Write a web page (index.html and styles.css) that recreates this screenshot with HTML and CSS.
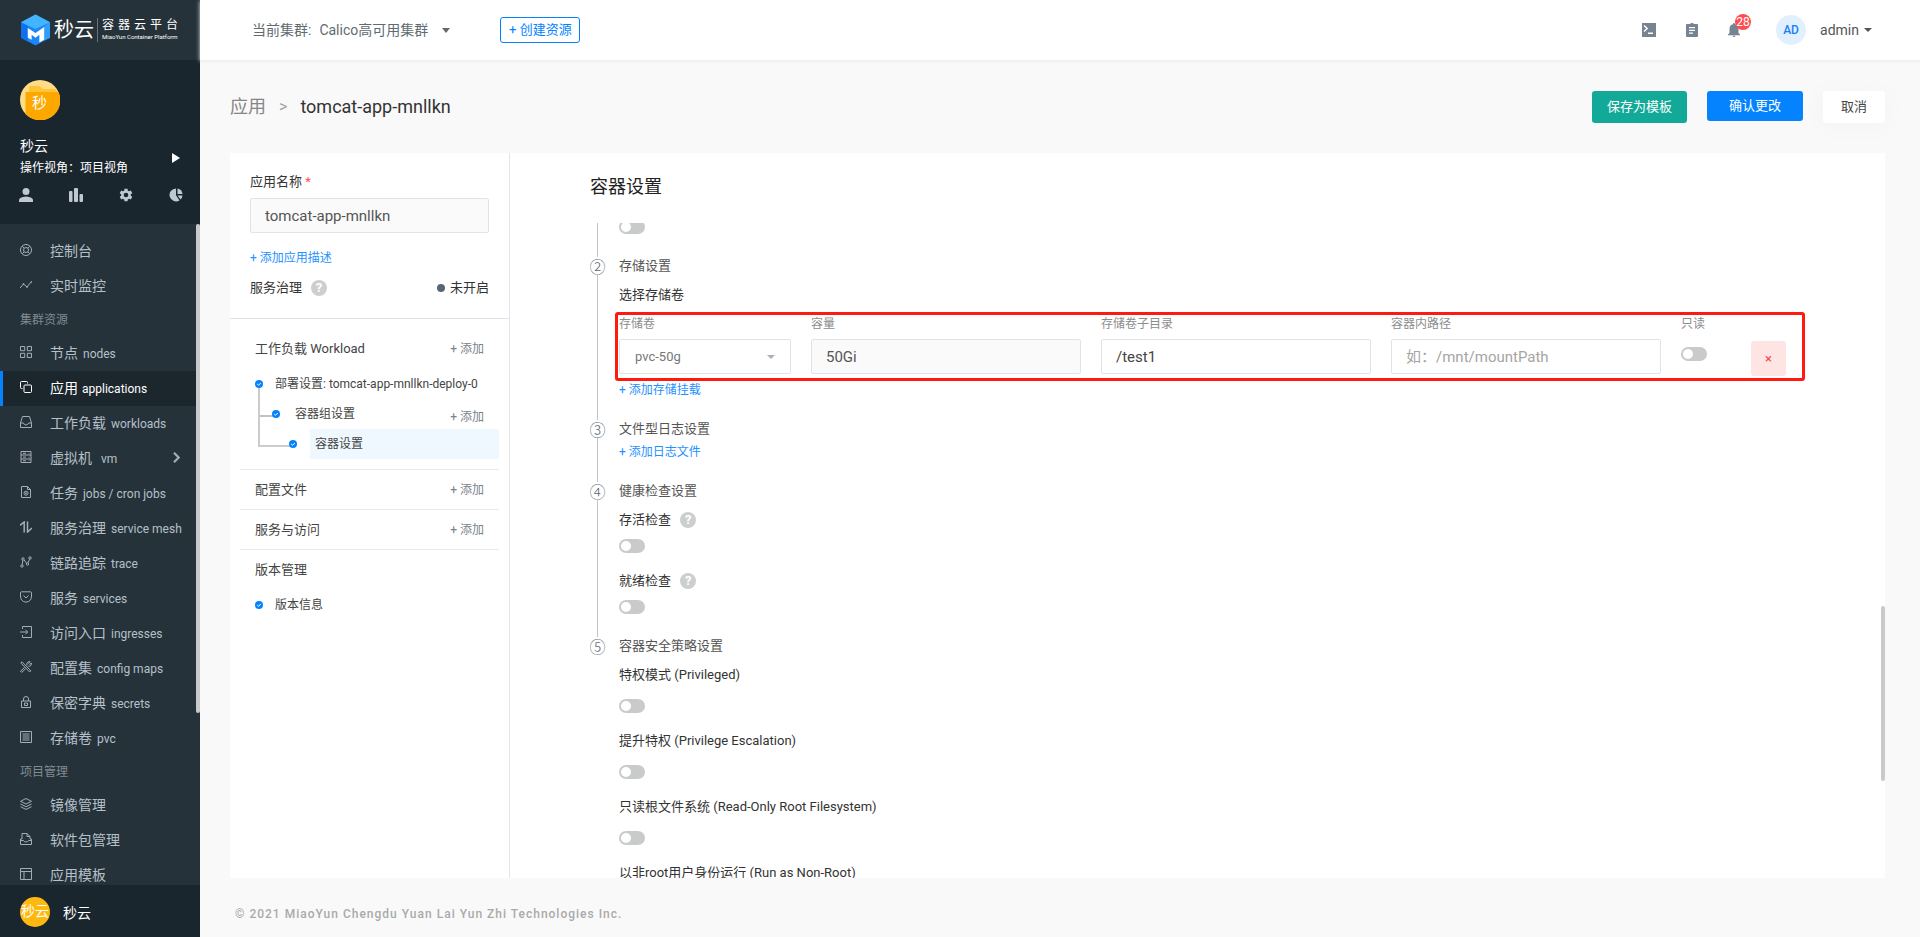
FILE: index.html
```html
<!DOCTYPE html>
<html lang="zh-CN">
<head>
    <meta charset="UTF-8">
    <meta name="viewport" content="width=device-width, initial-scale=1.0">
    <title>秒云 容器云平台</title>
    <link rel="stylesheet" href="styles.css">
</head>
<body>

<div class="page">
    <aside class="sidebar">
        <div class="logo">
            <svg class="logo-mark" viewBox="0 0 30 32">
                <path d="M15 0L30 8v16l-15 8L0 24V8z" fill="#1a86f7"/>
                <path d="M15 0l15 8-15 7L0 8z" fill="#43b4ff"/>
                <path d="M0 8l7 4v16L0 24z" fill="#0f6fee"/>
                <path d="M30 8v16l-6 3V12z" fill="#2f9dfb"/>
                <path d="M7 14l8 5 9-6v13l-5 3v-8l-4 3-4-3v5l-4-2z" fill="#fff"/>
            </svg>
            <span class="logo-name">秒云</span>
            <span class="logo-text">
                <span class="logo-cn">容器云平台</span>
                <span class="logo-en">MiaoYun Container Platform</span>
            </span>
        </div>

        <div class="user">
            <div class="user-avatar">
                <svg viewBox="0 0 40 40">
                    <circle cx="20" cy="20" r="20" fill="#ffdc85"/>
                    <path d="M9 11V7q0-1 1-1h9l4 3h12q3 3 3 5H9z" fill="#ffc336"/>
                    <path d="M6 12h32.500a20 20 0 0 1-33 21.800V13q0-1 .5-1z" fill="#fca800"/>
                </svg>
                <span class="user-avatar-text">秒</span>
            </div>
            <div class="user-row">
                <div>
                    <div class="user-name">秒云</div>
                    <div class="user-view">操作视角：项目视角</div>
                </div>
                <svg class="user-arrow" viewBox="0 0 8 10"><path d="M0 0l8 5-8 5z" fill="#fff"/></svg>
            </div>
            <div class="user-tools">
                <svg viewBox="0 0 14 14"><circle cx="7" cy="3.500" r="3.500"/><path d="M0 14v-2q0-3 7-3.500 7 .5 7 3.500v2z"/></svg>
                <svg viewBox="0 0 14 14"><rect x="0" y="3" width="3.500" height="11" rx="1"/><rect x="5" y="0" width="4" height="14" rx="1"/><rect x="10.500" y="6" width="3.500" height="8" rx="1"/></svg>
                <svg viewBox="0 0 24 24"><path d="M20.200 13.200a8 8 0 0 0 0-2.400l2.600-2-2.500-4.400-3.100 1.300a9 9 0 0 0-2.100-1.200L14.600 1.200H9.400l-.5 3.300a9 9 0 0 0-2.100 1.200L3.700 4.400 1.200 8.800l2.600 2a8 8 0 0 0 0 2.400l-2.600 2 2.500 4.400 3.100-1.300a9 9 0 0 0 2.100 1.200l.5 3.300h5.200l.5-3.300a9 9 0 0 0 2.100-1.200l3.100 1.300 2.500-4.400zM12 16a4 4 0 1 1 0-8 4 4 0 0 1 0 8z"/></svg>
                <svg viewBox="0 0 14 14"><path d="M7 .5v6.800l3.500 5.200A6.500 6.500 0 1 1 7 .5z"/><path d="M8.500.5A6 6 0 0 1 13.500 6H8.500z"/><path d="M8.500 7.500h5a6 6 0 0 1-2 4z"/></svg>
            </div>
        </div>

        <nav class="menu">
            <a class="menu-item" href="#"><svg viewBox="0 0 12 12"><circle cx="6" cy="6" r="5.500"/><circle cx="6" cy="6" r="2.500"/><path d="M2.200 2.200l2 2M9.800 2.200l-2 2M2.200 9.800l2-2M9.800 9.800l-2-2"/></svg>控制台</a>
            <a class="menu-item" href="#"><svg viewBox="0 0 12 12"><path d="M0 9l3.500-4L7 8l4-5"/><circle cx="3.500" cy="5" r=".5"/><circle cx="7" cy="8" r=".5"/><circle cx="11.300" cy="3" r=".4"/></svg>实时监控</a>
            <div class="menu-title">集群资源</div>
            <a class="menu-item" href="#"><svg viewBox="0 0 12 12"><path d="M.5.5h4.200v4.200H.5zM7.300.5h4.200v4.200H7.300zM.5 7.300h4.200v4.200H.5zM7.300 7.300h4.200v4.200H7.300z"/></svg>节点 <small>nodes</small></a>
            <a class="menu-item active" href="#"><svg viewBox="0 0 12 12"><rect x="4" y="4" width="7.500" height="7.500" rx="1"/><path d="M2.500 7.500h-1q-1 0-1-1v-5q0-1 1-1h5q1 0 1 1v1"/></svg>应用 <small>applications</small></a>
            <a class="menu-item" href="#"><svg viewBox="0 0 12 12"><path d="M.5 7L2.500.5h7l2 6.500v4.500H.5zM.5 7h3q.5 2 2.500 2t2.500-2h3"/></svg>工作负载 <small>workloads</small></a>
            <a class="menu-item" href="#"><svg viewBox="0 0 12 12"><path d="M1 .5h10v11H1zM1 4h10M1 8h10M3 2.300h3M3 6.100h3M3 9.800h3M9 2v.7M9 5.800v.7M9 9.400v.7"/></svg>虚拟机 <small class="vm">vm</small>
                <svg class="menu-more" viewBox="0 0 6 10"><path d="M.7.7L5 5 .7 9.300"/></svg></a>
            <a class="menu-item" href="#"><svg viewBox="0 0 12 12"><path d="M1.500.5h6l3 3v8h-9zM7.500.5v3h3"/><circle cx="6" cy="7.200" r="2"/><circle cx="6" cy="7.200" r=".5"/></svg>任务 <small>jobs / cron jobs</small></a>
            <a class="menu-item" href="#"><svg class="bold" viewBox="0 0 12 12"><path d="M0 4.300L4.200 1v10.500M7.500.5V11L12 7"/></svg>服务治理 <small>service mesh</small></a>
            <a class="menu-item" href="#"><svg viewBox="0 0 12 12"><circle cx="2" cy="10" r="1.200"/><circle cx="3" cy="3" r="1.200"/><circle cx="7.500" cy="8" r="1.200"/><circle cx="10" cy="2" r="1.200"/><path d="M2.200 8.800l.6-4.600M4 3.900l2.600 3.200M8 6.800l1.600-3.600"/></svg>链路追踪 <small>trace</small></a>
            <a class="menu-item" href="#"><svg viewBox="0 0 12 12"><path d="M1.500.8h9q1 0 1 1V5q0 5.500-5.500 6.200Q.5 10.500.5 5V1.800q0-1 1-1zM3.500 4.500L6 7l2.500-2.500"/></svg>服务 <small>services</small></a>
            <a class="menu-item" href="#"><svg viewBox="0 0 12 12"><path d="M2.500 3V.5h9v11h-9V9M0 6h7.500M5.500 3.800L7.700 6 5.500 8.200"/></svg>访问入口 <small>ingresses</small></a>
            <a class="menu-item" href="#"><svg viewBox="0 0 12 12"><path d="M1 1.500L2 .8l8.800 9-1.200 1.200L1 2.200zM4.500 6.500l-4 3.700 1.200 1.200 4-3.700M7 4.500q-.8-2.500 1-3.500 1-.6 2-.3L8.500 2.300l1.200 1.200 1.600-1.500q.5 1.500-.5 2.500t-2.500.7"/></svg>配置集 <small>config maps</small></a>
            <a class="menu-item" href="#"><svg viewBox="0 0 12 12"><path d="M1.500 5h9v6.500h-9zM3.500 5V3Q3.500.5 6 .5T8.500 3v2M4.500 7h3v2.500h-3z"/></svg>保密字典 <small>secrets</small></a>
            <a class="menu-item" href="#"><svg viewBox="0 0 12 12"><path d="M.5.5h11v11H.5zM2.500 3h7M2.500 5h7M2.500 7h7M2.500 9h7"/></svg>存储卷 <small>pvc</small></a>
            <div class="menu-title">项目管理</div>
            <a class="menu-item" href="#"><svg viewBox="0 0 12 12"><path d="M6 .5l5.500 2.800L6 6 .5 3.300zM.5 6L6 8.700 11.500 6M.5 8.700L6 11.400l5.500-2.700"/></svg>镜像管理</a>
            <a class="menu-item" href="#"><svg viewBox="0 0 12 12"><path d="M2 6V.5h5l3 3V6M7 .5v3h3M2 6H.5v5.500h11V6H10M.5 7.500h3Q4 9 6 9t2.500-1.500h3"/></svg>软件包管理</a>
            <a class="menu-item" href="#"><svg viewBox="0 0 12 12"><path d="M.5.5h11v11H.5zM.5 3.500h11M4 3.500v8"/></svg>应用模板</a>
            <span class="menu-scroll"></span>
        </nav>

        <div class="org">
            <span class="org-avatar">秒云</span>
            <span>秒云</span>
        </div>
    </aside>

    <div class="main">
        <header class="topbar">
            <label for="cluster">当前集群:</label>
            <span class="cluster-box">
                <select class="cluster" id="cluster">
                    <option>Calico高可用集群</option>
                </select>
                <svg class="caret" viewBox="0 0 8 5"><path d="M0 0h8L4 5z"/></svg>
            </span>
            <button class="create">+ 创建资源</button>

            <div class="topbar-right">
                <svg class="top-icon" viewBox="0 0 14 14"><path fill-rule="evenodd" d="M0 0h14v14H0zM1.500 3l2.700 2.500L1.500 8l1 1 3.700-3.500L2.500 2zM6 9.500V11h5V9.500z"/></svg>
                <svg class="top-icon" viewBox="0 0 14 14"><path fill-rule="evenodd" d="M2 1h3q.5-1 2-1t2 1h3q1 0 1 1v11q0 1-1 1H2q-1 0-1-1V2q0-1 1-1zM4 4v1.300h6V4zM4 6.800V8h6V6.800zM4 9.500v1.300h4V9.500z"/></svg>
                <span class="bell">
                    <svg class="top-icon" viewBox="0 0 14 14"><path d="M7 0q1 0 1 1.200Q11.500 2 11.500 6v4l1.500 1.500v.7H1v-.7L2.500 10V6Q2.500 2 6 1.200 6 0 7 0zM5.500 12.700h3q-.3 1.300-1.500 1.300t-1.500-1.300z"/></svg>
                    <span class="badge">28</span>
                </span>
                <span class="admin-avatar">AD</span>
                <button class="admin">admin <svg class="caret" viewBox="0 0 8 4"><path d="M0 0h8L4 4z"/></svg></button>
            </div>
        </header>

        <div class="title-row">
            <a class="crumb" href="#">应用</a>
            <span class="crumb-sep">&gt;</span>
            <h1>tomcat-app-mnllkn</h1>
            <div class="actions">
                <button class="btn btn-save">保存为模板</button>
                <button class="btn btn-ok">确认更改</button>
                <button class="btn btn-cancel">取消</button>
            </div>
        </div>

        <div class="card">
            <section class="side">
                <div class="app-info">
                    <label class="app-label" for="appName">应用名称 <span class="required">*</span></label>
                    <input class="field disabled" type="text" id="appName" value="tomcat-app-mnllkn" readonly>
                    <button class="link add-desc">+ 添加应用描述</button>
                    <div class="mesh-row">
                        <span>服务治理</span>
                        <span class="help">?</span>
                        <span class="mesh-status">未开启</span>
                    </div>
                </div>

                <div class="group">
                    <div class="group-head"><span>工作负载 Workload</span><button class="add">+ 添加</button></div>
                    <div class="tree">
                        <div class="node level-1"><svg class="dot" viewBox="0 0 8 8"><circle cx="4" cy="4" r="4"/><path d="M2.200 4l1.300 1.300 2.300-2.300"/></svg><span>部署设置: tomcat-app-mnllkn-deploy-0</span></div>
                        <div class="node level-2"><svg class="dot" viewBox="0 0 8 8"><circle cx="4" cy="4" r="4"/><path d="M2.200 4l1.300 1.300 2.300-2.300"/></svg><span>容器组设置</span><button class="add">+ 添加</button></div>
                        <div class="node level-3"><svg class="dot" viewBox="0 0 8 8"><circle cx="4" cy="4" r="4"/><path d="M2.200 4l1.300 1.300 2.300-2.300"/></svg><span class="selected">容器设置</span></div>
                    </div>
                </div>
                <div class="group">
                    <div class="group-head"><span>配置文件</span><button class="add">+ 添加</button></div>
                </div>
                <div class="group">
                    <div class="group-head"><span>服务与访问</span><button class="add">+ 添加</button></div>
                </div>
                <div class="group">
                    <div class="group-head"><span>版本管理</span></div>
                    <div class="node level-1"><svg class="dot" viewBox="0 0 8 8"><circle cx="4" cy="4" r="4"/><path d="M2.200 4l1.300 1.300 2.300-2.300"/></svg><span>版本信息</span></div>
                </div>
            </section>

            <section class="content">
                <h2>容器设置</h2>
                <div class="scroller">
                    <div class="steps">
                        <div class="step">
                            <div class="marker"></div>
                            <div class="step-body"><input class="switch" type="checkbox" aria-label="基础设置"></div>
                        </div>

                        <div class="step">
                            <div class="marker">②</div>
                            <div class="step-body">
                                <h3>存储设置</h3>
                                <div class="item-label">选择存储卷</div>
                                <div class="volume">
                                    <div class="cell">
                                        <label for="volume">存储卷</label>
                                        <span class="select-box">
                                            <select class="field" id="volume">
                                                <option>pvc-50g</option>
                                            </select>
                                            <svg class="caret" viewBox="0 0 8 4"><path d="M0 0h8L4 4z"/></svg>
                                        </span>
                                    </div>
                                    <div class="cell">
                                        <label for="capacity">容量</label>
                                        <input class="field disabled" type="text" id="capacity" value="50Gi" readonly>
                                    </div>
                                    <div class="cell">
                                        <label for="subPath">存储卷子目录</label>
                                        <input class="field" type="text" id="subPath" value="/test1">
                                    </div>
                                    <div class="cell">
                                        <label for="mountPath">容器内路径</label>
                                        <input class="field" type="text" id="mountPath" placeholder="如：/mnt/mountPath">
                                    </div>
                                    <div class="cell">
                                        <label for="readOnly">只读</label>
                                        <input class="switch" type="checkbox" id="readOnly">
                                    </div>
                                    <button class="remove">×</button>
                                </div>
                                <button class="link">+ 添加存储挂载</button>
                            </div>
                        </div>

                        <div class="step">
                            <div class="marker">③</div>
                            <div class="step-body">
                                <h3>文件型日志设置</h3>
                                <button class="link">+ 添加日志文件</button>
                            </div>
                        </div>

                        <div class="step">
                            <div class="marker">④</div>
                            <div class="step-body">
                                <h3>健康检查设置</h3>
                                <label class="item-label" for="liveness">存活检查 <span class="help">?</span></label>
                                <input class="switch" type="checkbox" id="liveness">
                                <label class="item-label" for="readiness">就绪检查 <span class="help">?</span></label>
                                <input class="switch" type="checkbox" id="readiness">
                            </div>
                        </div>

                        <div class="step step-last">
                            <div class="marker">⑤</div>
                            <div class="step-body">
                                <h3>容器安全策略设置</h3>
                                <label class="item-label" for="privileged">特权模式 (Privileged)</label>
                                <input class="switch" type="checkbox" id="privileged">
                                <label class="item-label" for="escalation">提升特权 (Privilege Escalation)</label>
                                <input class="switch" type="checkbox" id="escalation">
                                <label class="item-label" for="readOnlyRoot">只读根文件系统 (Read-Only Root Filesystem)</label>
                                <input class="switch" type="checkbox" id="readOnlyRoot">
                                <label class="item-label" for="nonRoot">以非root用户身份运行 (Run as Non-Root)</label>
                                <input class="switch" type="checkbox" id="nonRoot">
                            </div>
                        </div>
                    </div>
                </div>
                <span class="content-scroll"></span>
            </section>
        </div>

        <footer class="footer">© 2021 MiaoYun Chengdu Yuan Lai Yun Zhi Technologies Inc.</footer>
    </div>
</div>

</body>
</html>
```

FILE: styles.css
```css
* {
    box-sizing: border-box;
}
body {
    margin: 0;
    font-family: Roboto, "Noto Sans CJK SC", sans-serif;
    font-size: 13px;
    color: #333;
    background-color: #f9f9f9;
}
button, input, select {
    font-family: inherit;
    margin: 0;
}
button {
    border: none;
    background: none;
    padding: 0;
    cursor: pointer;
}
a {
    text-decoration: none;
}
h1, h2, h3 {
    margin: 0;
    font-weight: 400;
}
svg {
    display: block;
    flex-shrink: 0;
}
.page {
    display: flex;
    height: 100vh;
}

/* sidebar */
.sidebar {
    width: 200px;
    flex-shrink: 0;
    display: flex;
    flex-direction: column;
    background-color: #263239;
    color: #fff;
}
.logo {
    height: 60px;
    flex-shrink: 0;
    display: flex;
    align-items: center;
    padding-left: 21px;
}
.logo-mark {
    width: 29px;
    height: 32px;
}
.logo-name {
    margin-left: 4px;
    font-size: 20px;
    line-height: 28px;
}
.logo-text {
    margin-left: 3px;
    padding-left: 4px;
    border-left: 1px solid #66737b;
}
.logo-cn, .logo-en {
    display: block;
    white-space: nowrap;
}
.logo-cn {
    font-size: 12px;
    line-height: 14px;
    letter-spacing: 4px;
}
.logo-en {
    font-size: 6px;
    line-height: 10px;
}
.user {
    height: 164px;
    flex-shrink: 0;
    padding: 20px 20px 0;
    background-color: #1a262d;
}
.user-avatar {
    position: relative;
    width: 40px;
    height: 40px;
}
.user-avatar-text {
    position: absolute;
    left: 12px;
    top: 13px;
    font-size: 15px;
    line-height: 20px;
}
.user-row {
    display: flex;
    justify-content: space-between;
    align-items: center;
    margin-top: 16px;
}
.user-name {
    font-size: 14px;
    line-height: 20px;
}
.user-view {
    font-size: 12px;
    line-height: 24px;
}
.user-arrow {
    width: 8px;
    height: 10px;
}
.user-tools {
    display: flex;
    justify-content: space-between;
    margin: 8px -3px 0 -1px;
}
.user-tools svg {
    width: 14px;
    height: 14px;
    fill: #bfc8d1;
}
.menu {
    position: relative;
    flex: 1;
    min-height: 0;
    overflow: hidden;
    padding-top: 10px;
}
.menu-item {
    display: flex;
    align-items: center;
    height: 35px;
    padding: 0 20px 3px 17px;
    border-left: 3px solid transparent;
    font-size: 14px;
    color: #b5c0ca;
    white-space: nowrap;
}
.menu-item svg {
    width: 12px;
    height: 12px;
    margin-right: 18px;
    fill: none;
    stroke: #a3adb5;
    stroke-width: 1;
}
.menu-item svg.bold {
    stroke-width: 1.5;
}
.menu-item small {
    margin-left: 5px;
    padding-top: 3px;
    font-size: 12px;
}
.menu-item small.vm {
    margin-left: 9px;
}
.menu-item.active {
    color: #fff;
    background-color: #1b272c;
    border-left-color: #0583ff;
}
.menu-item.active svg {
    stroke: #fff;
}
.menu-item.active small {
    margin-left: 4px;
}
.menu-item svg.menu-more {
    width: 7px;
    height: 11px;
    margin: 0 0 0 auto;
    stroke-width: 2;
}
.menu-title {
    height: 32px;
    padding-left: 20px;
    font-size: 12px;
    line-height: 32px;
    color: #7f8b94;
}
.menu-scroll {
    position: absolute;
    top: 0;
    right: 0;
    width: 4px;
    height: 74%;
    border-radius: 2px;
    background-color: #c9cbcb;
}
.org {
    height: 52px;
    flex-shrink: 0;
    display: flex;
    align-items: center;
    gap: 13px;
    padding: 2px 20px 0;
    font-size: 14px;
    background-color: #1a262d;
}
.org-avatar {
    width: 30px;
    height: 30px;
    border-radius: 50%;
    background-color: #ffb80f;
    text-align: center;
    line-height: 28px;
}

/* top bar */
.main {
    flex: 1;
    min-width: 0;
    display: flex;
    flex-direction: column;
}
.topbar {
    height: 60px;
    flex-shrink: 0;
    display: flex;
    align-items: center;
    padding: 0 48px 0 52px;
    background-color: #fff;
    box-shadow: 0 1px 4px #e6e9ee;
    font-size: 14px;
    line-height: 20px;
    color: #606a70;
}
.cluster-box {
    position: relative;
    margin-left: 8px;
}
.cluster {
    appearance: none;
    border: none;
    padding: 0 22px 0 0;
    background: none;
    font-size: 14px;
    line-height: 20px;
    color: #606a70;
}
.caret {
    width: 8px;
    height: 5px;
    fill: currentColor;
}
.cluster-box .caret {
    position: absolute;
    right: 0;
    top: 8px;
}
.create {
    width: 80px;
    height: 26px;
    margin-left: 50px;
    border: 1px solid #0583ff;
    border-radius: 3px;
    font-size: 13px;
    line-height: 22px;
    color: #0583ff;
}
.topbar-right {
    display: flex;
    align-items: center;
    margin-left: auto;
}
.top-icon {
    width: 14px;
    height: 14px;
    margin-right: 29px;
    fill: #768390;
}
.bell {
    position: relative;
    margin-left: -1px;
}
.badge {
    position: absolute;
    left: 8px;
    top: -9px;
    width: 16px;
    height: 16px;
    border-radius: 50%;
    background-color: #ff4d4f;
    color: #fff;
    font-size: 12px;
    line-height: 16px;
    text-align: center;
}
.admin-avatar {
    width: 30px;
    height: 30px;
    margin-left: 6px;
    border-radius: 50%;
    background-color: #e0f0ff;
    color: #1a80f5;
    font-size: 12px;
    font-weight: 500;
    line-height: 30px;
    text-align: center;
}
.admin {
    display: flex;
    align-items: center;
    gap: 5px;
    margin-left: 14px;
    font-size: 14px;
    color: #555;
}
.admin .caret {
    height: 4px;
}

/* page title */
.title-row {
    height: 93px;
    flex-shrink: 0;
    display: flex;
    align-items: center;
    padding: 0 35px 0 30px;
    font-size: 18px;
    line-height: 26px;
}
.crumb {
    color: #868686;
}
.crumb-sep {
    margin: 0 13px;
    font-size: 16px;
    color: #a3a3a3;
}
h1 {
    font-size: 18px;
    line-height: 26px;
}
.actions {
    display: flex;
    align-items: flex-start;
    gap: 20px;
    margin-left: auto;
}
.btn {
    height: 32px;
    padding: 0 15px 2px;
    border-radius: 3px;
    font-size: 13px;
    color: #fff;
}
.btn-save {
    background-color: #13a999;
}
.btn-ok {
    height: 30px;
    padding: 0 22px 2px;
    background-color: #0583ff;
}
.btn-cancel {
    padding: 0 18px 2px;
    background-color: #fff;
    color: #444;
    box-shadow: 0 2px 20px #f2f3f6;
}

/* card */
.card {
    flex: 1;
    min-height: 0;
    display: flex;
    margin: 0 35px 0 30px;
    background-color: #fff;
}
.side {
    width: 280px;
    flex-shrink: 0;
    border-right: 1px solid #e1e5eb;
}
.app-info {
    display: flex;
    flex-direction: column;
    padding: 19px 20px 20px;
    border-bottom: 1px solid #dfe3ea;
}
.app-label {
    line-height: 20px;
    margin-bottom: 6px;
}
.required {
    color: #ff4d4f;
}
.field {
    width: 100%;
    height: 35px;
    padding: 0 14px;
    border: 1px solid #dfe3ea;
    border-radius: 2px;
    background-color: #fff;
    font-size: 15px;
    color: #444;
}
.field.disabled {
    background-color: #fafafa;
    color: #555;
}
.field::placeholder {
    color: #a5a5a5;
}
.link {
    align-self: flex-start;
    font-size: 12px;
    line-height: 18px;
    color: #2590ff;
}
.add-desc {
    margin-top: 16px;
}
.mesh-row {
    display: flex;
    align-items: center;
    margin-top: 11px;
    line-height: 20px;
}
.help {
    display: inline-block;
    width: 16px;
    height: 16px;
    margin-left: 9px;
    border-radius: 50%;
    background-color: #cdcfcf;
    color: #fff;
    font-size: 13px;
    font-weight: 700;
    line-height: 16px;
    text-align: center;
}
.item-label .help {
    margin-left: 6px;
}
.mesh-status {
    display: flex;
    align-items: center;
    gap: 5px;
    margin-left: auto;
}
.mesh-status::before {
    content: "";
    width: 8px;
    height: 8px;
    border-radius: 50%;
    background-color: #5b6675;
}
.group {
    margin: 0 10px;
    padding-bottom: 9px;
    border-bottom: 1px solid #e6e9ee;
}
.group:last-child {
    border-bottom: none;
}
.group-head {
    display: flex;
    justify-content: space-between;
    align-items: center;
    height: 30px;
    padding: 9px 15px 0;
    color: #444;
    line-height: 20px;
}
.app-info + .group .group-head {
    height: 50px;
}
.group:last-child .node {
    margin-top: 10px;
}
.add {
    font-size: 12px;
    line-height: 20px;
    color: #7a828c;
}
.tree {
    position: relative;
    padding-bottom: 1px;
}
/* connecting lines run under the dots */
.tree::before, .tree::after {
    content: "";
    position: absolute;
    left: 18px;
    top: 15px;
    border: solid #ccc;
    border-width: 0 0 2px 2px;
}
.tree::before {
    width: 16px;
    height: 31px;
    border-color: #c3c3c3;
}
.tree::after {
    width: 32px;
    height: 61px;
}
.node {
    display: flex;
    align-items: center;
    height: 30px;
    padding: 0 15px;
    font-size: 12px;
    line-height: 30px;
    color: #444;
}
.node span {
    margin-left: 12px;
    white-space: nowrap;
}
.node .add {
    margin-left: auto;
    padding-top: 5px;
}
.level-2 {
    padding-left: 32px;
}
.level-2 span {
    margin-left: 15px;
}
.level-3 {
    padding: 0 0 0 49px;
}
.level-3 .selected {
    flex: 1;
    margin-left: 13px;
    padding-left: 5px;
    background-color: #f0f8ff;
}
.dot {
    position: relative;
    z-index: 1;
    width: 8px;
    height: 8px;
    fill: #0583ff;
}
.dot path {
    fill: none;
    stroke: #fff;
    stroke-width: 1;
}

/* container settings */
.content {
    position: relative;
    flex: 1;
    min-width: 0;
    display: flex;
    flex-direction: column;
    padding-left: 80px;
}
h2 {
    padding: 20px 0 22px;
    font-size: 18px;
    line-height: 28px;
    color: #222;
}
.scroller {
    flex: 1;
    min-height: 0;
    overflow: hidden;
}
.steps {
    margin: -3px 99px 0 0;
}
.step {
    display: flex;
}
.step-body {
    flex: 1;
    min-width: 0;
    padding: 0 0 21px 14px;
}
.marker {
    display: flex;
    flex-direction: column;
    align-items: center;
    width: 15px;
    font-family: "Noto Sans CJK SC", sans-serif;
    font-size: 16px;
    font-weight: 300;
    line-height: 18px;
    color: #5b6675;
}
.marker::after {
    content: "";
    flex: 1;
    width: 1px;
    background-color: #c4c4c4;
}
.step-last .marker::after {
    display: none;
}
h3 {
    font-size: 13px;
    line-height: 18px;
    color: #555;
}
.step-body .link {
    display: block;
    margin-top: 5px;
}
.item-label {
    display: block;
    margin-top: 10px;
    line-height: 20px;
}
.switch {
    appearance: none;
    display: block;
    width: 26px;
    height: 14px;
    padding: 2px;
    border-radius: 7px;
    background-color: #c9cbcb;
}
.switch::before {
    content: "";
    display: block;
    width: 10px;
    height: 10px;
    border-radius: 50%;
    background-color: #fff;
}
.step-body > .switch:last-child {
    margin-bottom: 2px;
}
.item-label + .switch {
    margin-top: 9px;
}
.switch + .item-label {
    margin-top: 18px;
}
.step-last .item-label + .switch {
    margin-top: 14px;
}
.volume {
    position: relative;
    display: grid;
    grid-template-columns: 172fr 270fr 270fr 270fr 50px 35px;
    gap: 20px;
    margin-top: 10px;
}
.volume::after {
    content: "";
    position: absolute;
    inset: -3px -19px -5px -4px;
    border: 3px solid #ff1a0f;
    border-radius: 3px;
    pointer-events: none;
}
.cell label {
    display: block;
    margin-bottom: 6px;
    font-size: 12px;
    line-height: 18px;
    color: #8c8c8c;
}
.cell .switch {
    margin-top: 14px;
}
.select-box {
    position: relative;
    display: block;
}
.select-box .field {
    appearance: none;
    padding: 0 15px;
    font-size: 13px;
    color: #777;
}
.select-box .caret {
    position: absolute;
    right: 16px;
    top: 16px;
    height: 4px;
    fill: #a9b0bb;
}
.remove {
    height: 35px;
    margin-top: 26px;
    border-radius: 3px;
    background-color: #ffe4e4;
    color: #f5484a;
    font-size: 13px;
}
.content-scroll {
    position: absolute;
    right: 0;
    top: 453px;
    width: 4px;
    height: 175px;
    border-radius: 2px;
    background-color: #c9cbcb;
}
.footer {
    height: 59px;
    flex-shrink: 0;
    padding: 26px 35px 0;
    font-size: 12px;
    font-weight: 500;
    line-height: 20px;
    letter-spacing: 1px;
    color: #aaa;
}
```
